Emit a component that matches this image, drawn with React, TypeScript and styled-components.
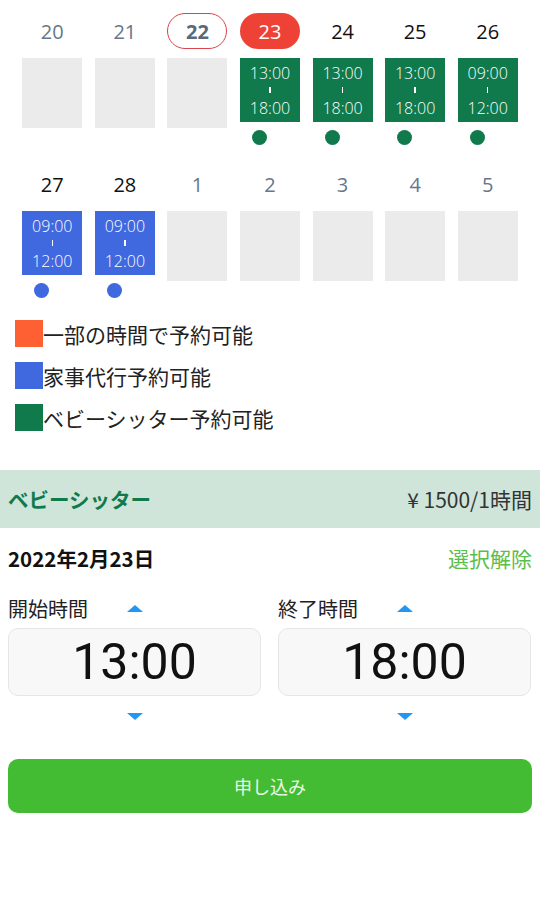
import styled, { createGlobalStyle } from 'styled-components';

const GlobalStyle = createGlobalStyle`
  html, body {
    margin: 0;
    padding: 0;
    background: #ffffff;
  }
  body {
    font-family: 'Noto Sans CJK JP', 'Noto Sans', sans-serif;
    color: #222;
  }
`;

type DayKind = 'past' | 'selectedOutline' | 'today' | 'normal' | 'next';
type Slot = { from: string; to: string; type: 'sitter' | 'house' };
type Day = { n: number; kind: DayKind; slot?: Slot };

const GREEN = '#107a4d';
const BLUE = '#4068df';
const ORANGE = '#fe5f33';

const weeks: Day[][] = [
  [
    { n: 20, kind: 'past' },
    { n: 21, kind: 'past' },
    { n: 22, kind: 'selectedOutline' },
    { n: 23, kind: 'today', slot: { from: '13:00', to: '18:00', type: 'sitter' } },
    { n: 24, kind: 'normal', slot: { from: '13:00', to: '18:00', type: 'sitter' } },
    { n: 25, kind: 'normal', slot: { from: '13:00', to: '18:00', type: 'sitter' } },
    { n: 26, kind: 'normal', slot: { from: '09:00', to: '12:00', type: 'sitter' } },
  ],
  [
    { n: 27, kind: 'normal', slot: { from: '09:00', to: '12:00', type: 'house' } },
    { n: 28, kind: 'normal', slot: { from: '09:00', to: '12:00', type: 'house' } },
    { n: 1, kind: 'next' },
    { n: 2, kind: 'next' },
    { n: 3, kind: 'next' },
    { n: 4, kind: 'next' },
    { n: 5, kind: 'next' },
  ],
];

const legend = [
  { color: ORANGE, label: '一部の時間で予約可能' },
  { color: BLUE, label: '家事代行予約可能' },
  { color: GREEN, label: 'ベビーシッター予約可能' },
];

export default function App() {
  return (
    <Page>
      <GlobalStyle />
      <Calendar>
        {weeks.map((week, wi) => (
          <Week key={wi}>
            {week.map((d) => (
              <DayCell key={d.n}>
                <DayNum $kind={d.kind}>{d.n}</DayNum>
                <DayBody>
                  {d.slot ? (
                    <>
                      <SlotBox $color={d.slot.type === 'sitter' ? GREEN : BLUE}>
                        <span>{d.slot.from}</span>
                        <Tick />
                        <span>{d.slot.to}</span>
                      </SlotBox>
                      <Dot $color={d.slot.type === 'sitter' ? GREEN : BLUE} />
                    </>
                  ) : (
                    <EmptyBox />
                  )}
                </DayBody>
              </DayCell>
            ))}
          </Week>
        ))}
      </Calendar>

      <Legend>
        {legend.map((l) => (
          <LegendRow key={l.label}>
            <Swatch $color={l.color} />
            <span>{l.label}</span>
          </LegendRow>
        ))}
      </Legend>

      <ServiceBar>
        <ServiceName>ベビーシッター</ServiceName>
        <Price>¥ 1500/1時間</Price>
      </ServiceBar>

      <DateRow>
        <DateText>2022年2月23日</DateText>
        <ClearLink>選択解除</ClearLink>
      </DateRow>

      <Pickers>
        <Picker>
          <PickerHead>
            <PickerLabel>開始時間</PickerLabel>
            <Arrow $dir='up' />
          </PickerHead>
          <TimeBox>13:00</TimeBox>
          <PickerFoot>
            <Arrow $dir='down' />
          </PickerFoot>
        </Picker>
        <Picker>
          <PickerHead>
            <PickerLabel>終了時間</PickerLabel>
            <Arrow $dir='up' />
          </PickerHead>
          <TimeBox>18:00</TimeBox>
          <PickerFoot>
            <Arrow $dir='down' />
          </PickerFoot>
        </Picker>
      </Pickers>

      <SubmitWrap>
        <SubmitBtn>申し込み</SubmitBtn>
      </SubmitWrap>
    </Page>
  );
}

const Page = styled.div`
  width: 540px;
  min-height: 898px;
  background: #fff;
`;

const Calendar = styled.div`
  padding: 13px 16px 0;
  display: flex;
  flex-direction: column;
  gap: 21px;
`;

const Week = styled.div`
  display: grid;
  grid-template-columns: repeat(7, 1fr);
  align-items: start;
`;

const DayCell = styled.div`
  display: flex;
  flex-direction: column;
  align-items: center;
  gap: 9px;
`;

const numColor: Record<DayKind, string> = {
  past: '#66778a',
  selectedOutline: '#5a6878',
  today: '#ffffff',
  normal: '#111111',
  next: '#66778a',
};

const DayNum = styled.div<{ $kind: DayKind }>`
  width: 60px;
  height: 36px;
  box-sizing: border-box;
  border-radius: 18px;
  display: flex;
  align-items: center;
  justify-content: center;
  font-family: 'Open Sans', 'Noto Sans', sans-serif;
  font-size: 20px;
  font-weight: ${(p) => (p.$kind === 'selectedOutline' ? 700 : 400)};
  color: ${(p) => numColor[p.$kind]};
  background: ${(p) => (p.$kind === 'today' ? '#ef4237' : 'transparent')};
  border: ${(p) =>
    p.$kind === 'selectedOutline' ? '1.5px solid #d9434b' : 'none'};
`;

const DayBody = styled.div`
  width: 60px;
  display: flex;
  flex-direction: column;
  align-items: flex-start;
`;

const EmptyBox = styled.div`
  width: 60px;
  height: 70px;
  background: #ebebeb;
`;

const SlotBox = styled.div<{ $color: string }>`
  width: 60px;
  height: 64px;
  background: ${(p) => p.$color};
  color: #fff;
  display: flex;
  flex-direction: column;
  align-items: center;
  justify-content: center;
  font-family: 'Open Sans', 'Noto Sans', sans-serif;
  font-size: 16px;
  font-weight: 300;
  line-height: 18px;
`;

const Tick = styled.i`
  display: block;
  width: 1.5px;
  height: 6px;
  margin: 5px 0 6px;
  background: #fff;
`;

const Dot = styled.div<{ $color: string }>`
  width: 15px;
  height: 15px;
  border-radius: 50%;
  margin: 8px 0 0 12px;
  background: ${(p) => p.$color};
`;

const Legend = styled.div`
  padding: 22px 15px 0;
  display: flex;
  flex-direction: column;
  gap: 15px;
`;

const LegendRow = styled.div`
  display: flex;
  align-items: center;
  height: 27px;
  font-size: 21px;
  color: #222;
`;

const Swatch = styled.div<{ $color: string }>`
  width: 28px;
  height: 27px;
  background: ${(p) => p.$color};
`;

const ServiceBar = styled.div`
  margin-top: 39px;
  height: 58px;
  padding: 0 8px;
  background: #cfe5da;
  display: flex;
  align-items: center;
  justify-content: space-between;
`;

const ServiceName = styled.div`
  font-size: 20.5px;
  font-weight: 700;
  color: ${GREEN};
`;

const Price = styled.div`
  font-size: 21px;
  color: #333;
`;

const DateRow = styled.div`
  padding: 0 8px;
  height: 60px;
  display: flex;
  align-items: center;
  justify-content: space-between;
`;

const DateText = styled.div`
  font-size: 20.5px;
  font-weight: 700;
  color: #111;
`;

const ClearLink = styled.div`
  font-size: 21px;
  color: #5cbd4a;
`;

const Pickers = styled.div`
  padding: 0 9px 0 8px;
  display: grid;
  grid-template-columns: 1fr 1fr;
  gap: 17px;
`;

const Picker = styled.div`
  display: flex;
  flex-direction: column;
`;

const PickerHead = styled.div`
  display: grid;
  grid-template-columns: 1fr auto 1fr;
  align-items: center;
  height: 40px;
`;

const PickerLabel = styled.div`
  font-size: 20px;
  color: #222;
  white-space: nowrap;
`;

const PickerFoot = styled.div`
  height: 40px;
  display: flex;
  justify-content: center;
  align-items: center;
`;

const Arrow = styled.div<{ $dir: 'up' | 'down' }>`
  width: 0;
  height: 0;
  border-left: 8px solid transparent;
  border-right: 8px solid transparent;
  ${(p) =>
    p.$dir === 'up'
      ? 'border-bottom: 7px solid #2196f3;'
      : 'border-top: 7px solid #2196f3;'}
`;

const TimeBox = styled.div`
  height: 68px;
  box-sizing: border-box;
  border: 1px solid #e6e6e6;
  border-radius: 10px;
  background: #f8f8f8;
  display: flex;
  align-items: center;
  justify-content: center;
  font-family: Roboto, 'Noto Sans', sans-serif;
  font-size: 50px;
  color: #111;
`;

const SubmitWrap = styled.div`
  padding: 23px 8px 0;
`;

const SubmitBtn = styled.button`
  width: 100%;
  height: 54px;
  border: none;
  border-radius: 10px;
  background: #43bc34;
  color: #eaf7e4;
  font-family: 'Noto Sans CJK JP', 'Noto Sans', sans-serif;
  font-size: 18px;
`;
